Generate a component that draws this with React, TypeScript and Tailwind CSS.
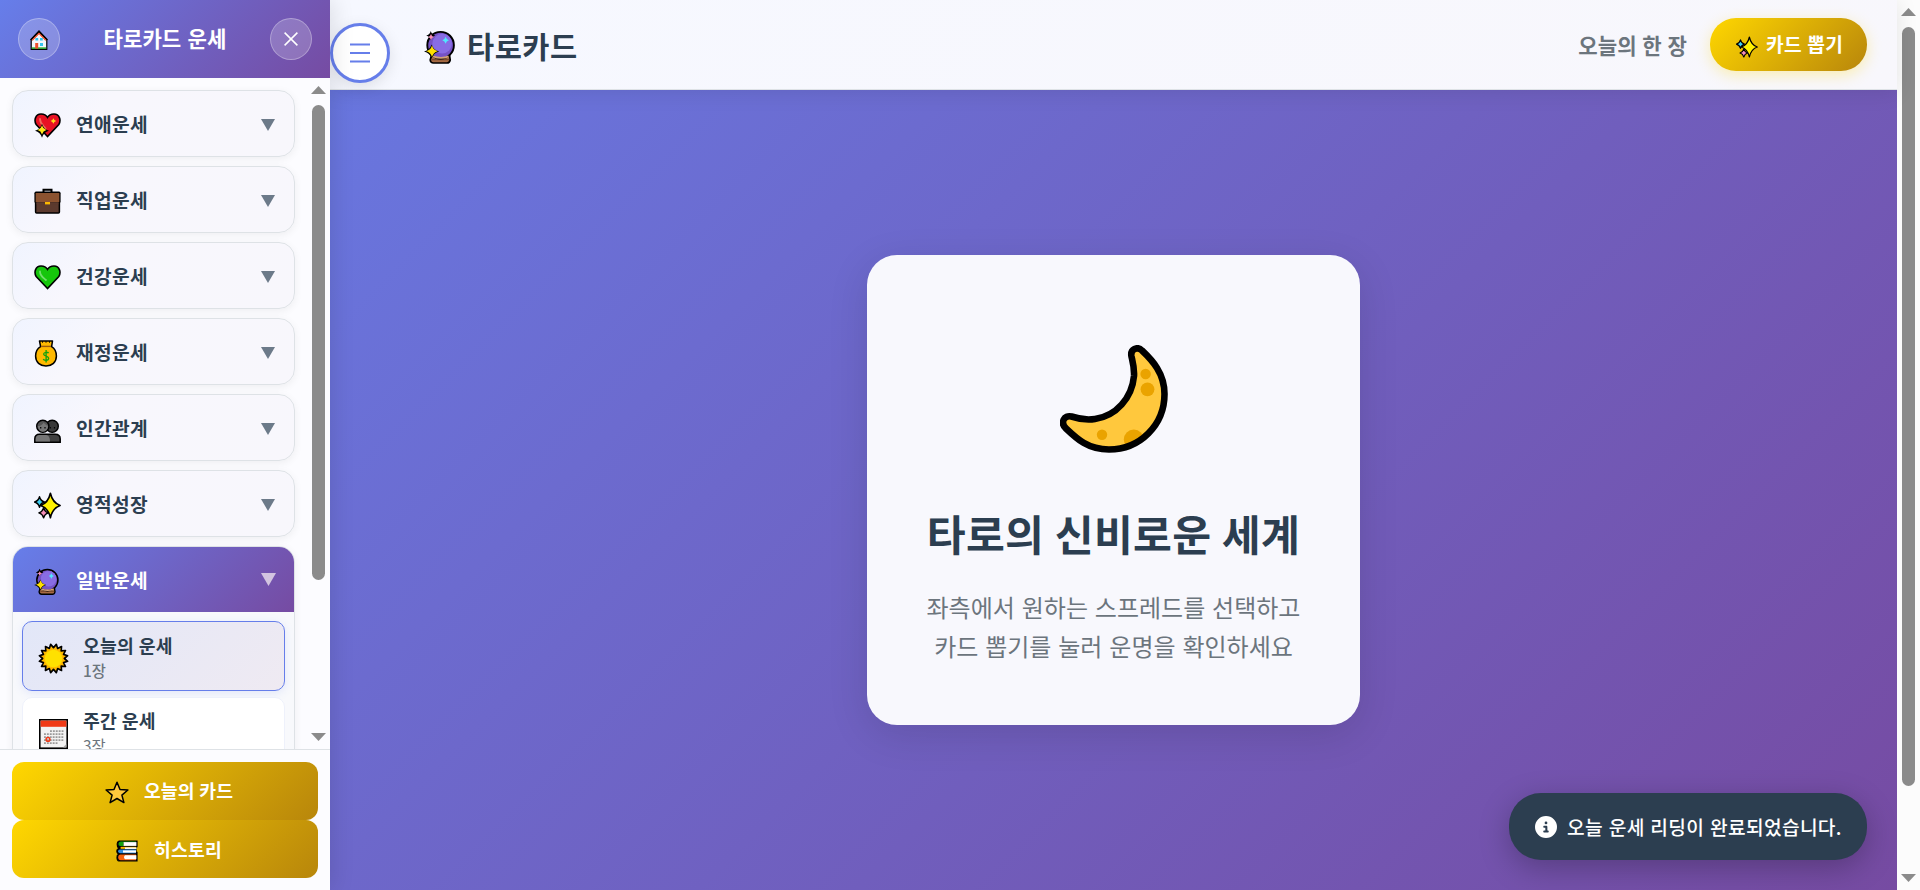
import React from "react";

type IconProps = { className?: string };

const sparkle = (x: number, y: number, rx: number, ry: number) =>
  `M${x} ${y - ry}Q${x + rx * 0.22} ${y - ry * 0.22} ${x + rx} ${y}Q${x + rx * 0.22} ${y + ry * 0.22} ${x} ${y + ry}Q${x - rx * 0.22} ${y + ry * 0.22} ${x - rx} ${y}Q${x - rx * 0.22} ${y - ry * 0.22} ${x} ${y - ry}Z`;

function HomeIcon({ className }: IconProps) {
  return (
    <svg viewBox="0 0 18 20" className={className}>
      <path d="M1.2 9.500V19.400H16.8V9.500L9 2Z" fill="#f4f7fb" stroke="#000" strokeWidth="1.2" />
      <path d="M1.800 17.400H16.200V18.800H1.800Z" fill="#16a018" />
      <path d="M2.200 10.400L9 3.400L15.800 10.400" fill="none" stroke="#f0401c" strokeWidth="1.300" />
      <path d="M.5 9.800L9 .9L17.500 9.800" fill="none" stroke="#000" strokeWidth="1.2" />
      <path d="M5.400 8H8.200V10.600H5.400ZM10 8H12.800V10.600H10ZM10 13H13V16H10Z" fill="#35c5f0" />
      <path d="M5.200 13H8.200V18.600H5.200Z" fill="#f0502c" />
    </svg>
  );
}

function HeartIcon({ className }: IconProps) {
  return (
    <svg viewBox="0 0 27 27" className={className}>
      <path d="M13.5 24.500L2.2 12.600C-.4 8 1.6 2 7 2C10 2 12.4 3.400 13.5 5.400C14.6 3.400 17 2 20 2C25.4 2 27.4 8 24.8 12.600Z" fill="#e81224" stroke="#000" strokeWidth="1.6" />
      <path d="M6 7C6 12 10 14 11.500 16.500" fill="none" stroke="#f26b5c" strokeWidth="1.8" strokeLinecap="round" />
      <path d={sparkle(19.4, 9, 2.8, 2.8)} fill="#ffd91a" />
      <path d={sparkle(8, 18.800, 7, 7)} fill="#000" />
      <path d={sparkle(8, 18, 4.400, 4.400)} fill="#ffe81a" />
    </svg>
  );
}

function BriefcaseIcon({ className }: IconProps) {
  return (
    <svg viewBox="0 0 27 27" className={className}>
      <path d="M9.5 5V1.8H17.5V5" fill="none" stroke="#000" strokeWidth="2" />
      <rect x="1.6" y="13" width="23.8" height="12" rx="1" fill="#5c3a2e" stroke="#000" strokeWidth="1.5" />
      <rect x=".4" y="3.600" width="26.200" height="11.600" rx="1.6" fill="#000" />
      <rect x="1.700" y="5" width="23.600" height="9.200" rx=".6" fill="#8c5330" />
      <rect x="2.4" y="14.2" width="22.2" height="2" fill="#5c3a2e" />
      <rect x="11" y="14" width="5" height="2.4" fill="#fcb900" />
    </svg>
  );
}

function GreenHeartIcon({ className }: IconProps) {
  return (
    <svg viewBox="0 0 27 27" className={className}>
      <path d="M13.5 24.500L2.2 12.600C-.4 8 1.6 2 7 2C10 2 12.4 3.400 13.5 5.400C14.6 3.400 17 2 20 2C25.4 2 27.4 8 24.8 12.600Z" fill="#16c60c" stroke="#000" strokeWidth="1.6" />
      <path d="M6 7.500C6 12 9 13.500 12 16" fill="none" stroke="#73de6c" strokeWidth="1.8" strokeLinecap="round" />
    </svg>
  );
}

function MoneyIcon({ className }: IconProps) {
  return (
    <svg viewBox="0 0 27 27" className={className}>
      <path d="M5.5 1H18.5L17.6 6.6C20.5 8.4 22.4 12 22.4 16C22.4 22.4 18 26 12 26C6 26 1.6 22.4 1.6 16C1.6 12 3.5 8.4 6.6 6.6Z" fill="#ffb900" stroke="#000" strokeWidth="1.5" strokeLinejoin="round" />
      <path d="M7.2 6.4H17" stroke="#9a5b10" strokeWidth="1.4" />
      <path d="M8.5 1.2V2.7M12 1.2V2.7M15.5 1.2V2.7" stroke="#000" strokeWidth="1" />
      <path d="M14.6 13.1C14 12 10 11.7 9.6 14C9.6 16.6 14.7 15.6 14.7 18.3C14.6 21 9.8 20.8 9.3 19M12.1 10V22.4" fill="none" stroke="#13a10e" strokeWidth="1.3" />
    </svg>
  );
}

function PeopleIcon({ className }: IconProps) {
  return (
    <svg viewBox="0 -1.5 27 27" className={className}>
      <circle cx="18.2" cy="8.8" r="6.1" fill="#383838" stroke="#000" strokeWidth="1.4" />
      <circle cx="8.8" cy="8.8" r="6.1" fill="#555" stroke="#000" strokeWidth="1.4" />
      <path d="M4 8.5C6 9 8.5 7.4 9.5 5C11 7 13 8 14 8.2C14 12 12 14 8.8 14.2C6 14 4 12 4 8.5Z" fill="#767676" />
      <path d="M6.7 9.5V10.9M11 9.5V10.9M16.3 9.5V10.9M20.5 9.5V10.9" stroke="#000" strokeWidth="1.2" />
      <path d="M.8 24.700V21.5Q.8 16.7 5.8 16.7H21.2Q26.2 16.7 26.2 21.5V24.700Z" fill="#404040" stroke="#000" strokeWidth="1.5" />
      <path d="M1.7 24V21.5Q1.7 17.6 5.8 17.6H12Q16 18 16 24Z" fill="#767676" />
    </svg>
  );
}

function SparklesIcon({ className }: IconProps) {
  return (
    <svg viewBox="0 0 27 27" className={className} strokeLinejoin="round">
      <path d={sparkle(5.5, 10, 4.9, 5.3)} fill="#3fd0f5" stroke="#000" strokeWidth="1.4" />
      <path d={sparkle(9.6, 20.8, 4.7, 5)} fill="#f78fb8" stroke="#000" strokeWidth="1.4" />
      <path d={sparkle(16.4, 13.5, 9.7, 12.2)} fill="#fff100" stroke="#000" strokeWidth="1.6" />
    </svg>
  );
}

function CrystalBallIcon({ className }: IconProps) {
  return (
    <svg viewBox="0 0 31 34" className={className}>
      <path d="M7.5 25H25.5L26.2 30Q25.6 33 23 33H9.4Q6.600 33 6.200 30Z" fill="#a56a43" stroke="#000" strokeWidth="1.7" />
      <path d="M7.800 29.6H25" stroke="#7a4a2c" strokeWidth="1.2" />
      <circle cx="16.6" cy="15.2" r="13.3" fill="#7552c5" stroke="#000" strokeWidth="1.9" />
      <circle cx="18.2" cy="13.6" r="9.8" fill="#886ce4" />
      <path d="M9 26.400Q17 29.500 24.6 26.400" stroke="#d2a078" strokeWidth="1.8" fill="none" />
      <path d={sparkle(6.800, 5.600, 4.600, 4.600)} fill="#000" />
      <path d={sparkle(7, 7, 2.900, 3)} fill="#f78fb8" />
      <path d={sparkle(21.600, 10.2, 3.3, 3.5)} fill="#50e6ff" />
      <path d={sparkle(7.6, 21.4, 7.6, 7)} fill="#000" />
      <path d={sparkle(8, 21.2, 5.7, 5.7)} fill="#ffe000" />
    </svg>
  );
}

function SunIcon({ className }: IconProps) {
  const points: string[] = [];
  for (let i = 0; i < 32; i++) {
    const r = i % 2 ? 11.2 : 14.9;
    const a = (i * Math.PI) / 16 + Math.PI / 16;
    points.push(`${(16 + r * Math.sin(a)).toFixed(2)},${(16 - r * Math.cos(a)).toFixed(2)}`);
  }
  return (
    <svg viewBox="0 0 32 32" className={className}>
      <polygon points={points.join(" ")} fill="#ffb900" stroke="#000" strokeWidth="1.7" strokeLinejoin="round" />
      <circle cx="16" cy="16" r="9" fill="#ffe100" />
    </svg>
  );
}

function CalendarIcon({ className }: IconProps) {
  return (
    <svg viewBox="0 0 29 30" className={className}>
      <rect x=".8" y=".8" width="27.4" height="28.4" fill="#f2f2f2" stroke="#000" strokeWidth="1.6" />
      <rect x="1.6" y="1.6" width="25.8" height="6.2" fill="#f03a17" />
      <path d="M11 12.2H25M5 15.2H25M5 18.2H25M5 21.2H25M5 24.2H19" stroke="#9a9a9a" strokeWidth="1.8" strokeDasharray="1.9 1" />
      <circle cx="9" cy="20.4" r="1.9" fill="none" stroke="#f03a17" strokeWidth="1.5" />
      <path d="M24 28.4L27.4 25V28.4Z" fill="#a8a8a8" />
    </svg>
  );
}

function StarIcon({ className }: IconProps) {
  return (
    <svg viewBox="0 0 24 23" className={className}>
      <path d="M12 1.2L15 8.5L22.9 9L16.9 14.1L18.9 21.6L12 17.5L5.1 21.6L7.1 14.1L1.1 9L9 8.5Z" fill="#ffc83d" stroke="#000" strokeWidth="1.5" strokeLinejoin="round" />
    </svg>
  );
}

function BooksIcon({ className }: IconProps) {
  return (
    <svg viewBox="0 0 22 22" className={className}>
      <path d="M3 1H21V6.6H20V12.4H21V21H3Q1 20.6 1 17.5Q1 15 2.4 14Q.8 13.2 .8 11Q.8 9 3 8.4Q1 7 1.2 4Q1.2 1.4 3 1Z" fill="#000" stroke="#000" strokeWidth="1.2" />
      <path d="M2.4 4Q2.4 1.6 4.6 1.4H20V2H8Q6.8 4 8 6H4.2Q2.4 5.8 2.4 4Z" fill="#13a10e" />
      <rect x="7.6" y="2.1" width="12.8" height="3.8" fill="#fff" />
      <path d="M4.6 6.8H20V8.8H4.6Z" fill="#ffb900" />
      <path d="M9 7.4H20.5V9.1H9Z" fill="#f5f5f5" />
      <path d="M2 11.6Q2 9.8 4 9.6H20V13.2H4Q2 13 2 11.6Z" fill="#2d8cdf" />
      <path d="M7 10.4H20V12.6H7Z" fill="#fff" />
      <path d="M2.2 17.2Q2.2 14.5 4.6 14.4H20V20.2H4.6Q2.2 20 2.2 17.2Z" fill="#f7630c" />
      <path d="M9 15.2H20.4V19.3H9Q7 17.2 9 15.2Z" fill="#fff" />
    </svg>
  );
}

const moonPath =
  "M71.5 11.5C70 4 77.5 1 82 5.5C92 15 104.5 28 104.5 49C104.5 80 80 104.5 49 104.5C28 104.5 17 94 6 83.5C0 78 4 69.5 11.5 71.5C19 74 26 75.5 35 74C56 71 72 53 74 31C74.5 23 73 18 71.5 11.5Z";

function MoonIcon({ className }: IconProps) {
  return (
    <svg viewBox="0 0 108 108" className={className}>
      <defs>
        <clipPath id="moon-shape">
          <path d={moonPath} />
        </clipPath>
      </defs>
      <g clipPath="url(#moon-shape)">
        <rect width="108" height="108" fill="#ffc83d" />
        <circle cx="85.6" cy="29" r="5.2" fill="#eaa300" />
        <circle cx="87.5" cy="44.3" r="6.9" fill="#eaa300" />
        <circle cx="42" cy="89.7" r="5.2" fill="#eaa300" />
        <circle cx="73.8" cy="94.6" r="10" fill="#eaa300" />
      </g>
      <path d={moonPath} fill="none" stroke="#000" strokeWidth="6.6" />
    </svg>
  );
}

function InfoIcon({ className }: IconProps) {
  return (
    <svg viewBox="0 0 512 512" className={className}>
      <path fill="#fff" d="M256 512A256 256 0 1 0 256 0a256 256 0 1 0 0 512zM216 336h24V272H216c-13.300 0-24-10.700-24-24s10.700-24 24-24h48c13.300 0 24 10.700 24 24v88h8c13.300 0 24 10.700 24 24s-10.700 24-24 24H216c-13.300 0-24-10.700-24-24s10.700-24 24-24zm40-208a32 32 0 1 1 0 64 32 32 0 1 1 0-64z" />
    </svg>
  );
}

function Triangle({ className, up }: IconProps & { up?: boolean }) {
  return (
    <svg viewBox="0 0 14 12" preserveAspectRatio="none" className={className}>
      <path d={up ? "M0 12H14L7 0Z" : "M0 0H14L7 12Z"} fill="currentColor" />
    </svg>
  );
}

const categories = [
  { label: "연애운세", Icon: HeartIcon },
  { label: "직업운세", Icon: BriefcaseIcon },
  { label: "건강운세", Icon: GreenHeartIcon },
  { label: "재정운세", Icon: MoneyIcon },
  { label: "인간관계", Icon: PeopleIcon },
  { label: "영적성장", Icon: SparklesIcon },
];

function Sidebar() {
  return (
    <aside className="relative z-10 flex h-full w-[330px] shrink-0 flex-col bg-[#fcfcff] shadow-[4px_0_20px_rgba(0,0,0,0.1)]">
      <div className="flex h-[78px] shrink-0 items-center justify-between bg-[linear-gradient(135deg,#667eea,#764ba2)] px-[18px]">
        <button className="flex size-[42px] items-center justify-center rounded-full border border-white/30 bg-white/20">
          <HomeIcon className="mt-0.5 h-5 w-[18px]" />
        </button>
        <h2 className="pb-[3px] text-[21.12px] font-bold leading-8 text-white [word-spacing:1.5px]">타로카드 운세</h2>
        <button className="flex size-[42px] items-center justify-center rounded-full border border-white/30 bg-white/20">
          <svg viewBox="0 0 14 14" className="size-3.5">
            <path d="M.6 .6L13.4 13.4M13.4 .6L.6 13.4" stroke="#fff" strokeWidth="1.5" />
          </svg>
        </button>
      </div>

      <div className="flex min-h-0 flex-1 justify-between overflow-hidden">
        <div className="flex w-[295px] flex-col gap-[9px] pl-3 pt-3">
          {categories.map(({ label, Icon }) => (
            <button
              key={label}
              className="flex h-[67px] shrink-0 items-center rounded-2xl border border-[#dee2e6] bg-[linear-gradient(135deg,#f0f4ff,#f8f7fd_30%,#f8f7fc)] pl-[21px] pr-[19px] shadow-[0_2px_8px_rgba(0,0,0,0.06)]"
            >
              <Icon className="mt-1 size-[27px]" />
              <span className="ml-[15px] text-[19.2px] font-semibold leading-8 tracking-[0.34px] text-[#2c3e50]">{label}</span>
              <Triangle className="ml-auto mt-0.5 h-3 w-3.5 text-[#6c7a89]" />
            </button>
          ))}

          <div className="flex h-[400px] shrink-0 flex-col overflow-hidden rounded-2xl border border-[#dee2e6] bg-[#f8f9fc] shadow-[0_2px_8px_rgba(0,0,0,0.06)]">
            <button className="flex h-[65px] shrink-0 items-center bg-[linear-gradient(135deg,#667eea,#764ba2)] pl-[21px] pr-[18px]">
              <CrystalBallIcon className="mt-1 h-[27px] w-[25px]" />
              <span className="ml-[17px] text-[19.2px] font-bold leading-8 tracking-[0.34px] text-white">일반운세</span>
              <Triangle className="ml-auto h-[13px] w-[15px] text-[#d3c4e0]" />
            </button>
            <div className="flex flex-col gap-1.5 px-[9px] pt-[9px]">
              <button className="flex h-[70px] items-center rounded-[10px] border border-[#667eea] bg-[linear-gradient(135deg,#e2e7f8,#efeaf2)] pl-[15px] text-left shadow-[0_2px_10px_rgba(102,126,234,0.15)]">
                <SunIcon className="mt-1 size-[31px]" />
                <span className="ml-[14px] flex flex-col pt-0.5">
                  <span className="text-[18.24px] font-semibold leading-[26px] tracking-[0.2px] text-[#2c3e50] [word-spacing:0.5px]">오늘의 운세</span>
                  <span className="text-[15.36px] font-medium leading-[25px] text-[#6c757d]">1장</span>
                </span>
              </button>
              <button className="flex h-[70px] items-center rounded-[10px] border border-[#eef1fb] bg-white pl-[15px] text-left">
                <CalendarIcon className="ml-px mt-1 h-[30px] w-[29px]" />
                <span className="ml-[15px] flex flex-col">
                  <span className="text-[18.24px] font-semibold leading-[26px] tracking-[0.2px] text-[#2c3e50] [word-spacing:0.5px]">주간 운세</span>
                  <span className="text-[15.36px] leading-[25px] text-[#6c757d]">3장</span>
                </span>
              </button>
            </div>
          </div>
        </div>

        <div className="mr-1 flex w-[15px] flex-col items-center pb-2 pt-2 text-[#8b8b8b]">
          <Triangle up className="h-2 w-[15px]" />
          <div className="mt-[11px] h-[475px] w-[13px] rounded-full bg-[#8b8b8b]" />
          <Triangle className="mt-auto h-2 w-[15px]" />
        </div>
      </div>

      <div className="h-[141px] shrink-0 border-t border-[#dee2e6] px-3 pt-3">
        <button className="flex h-[58px] w-full items-center justify-center gap-[15px] rounded-xl bg-[linear-gradient(135deg,#ffd700,#b8860b)] pl-2 text-[18.24px] font-bold tracking-[0.2px] text-white">
          <StarIcon className="mt-0.5 h-[23px] w-6" />
          <span>오늘의 카드</span>
        </button>
        <button className="flex h-[58px] w-full items-center justify-center gap-4 rounded-xl bg-[linear-gradient(135deg,#ffd700,#b8860b)] pl-2 text-[18.24px] font-bold tracking-[0.2px] text-white">
          <BooksIcon className="mt-1 size-[22px]" />
          <span className="pt-0.5">히스토리</span>
        </button>
      </div>
    </aside>
  );
}

export default function App() {
  return (
    <div className="flex h-[890px] w-[1920px] overflow-hidden bg-[#fcfcfc] font-['Noto_Sans_CJK_KR',sans-serif]">
      <div className="relative flex h-full w-[1897px] shrink-0 bg-[linear-gradient(135deg,#667eea,#764ba2)]">
        <Sidebar />
        <div className="flex min-w-0 flex-1 flex-col">
          <header className="flex h-[90px] shrink-0 items-center border-b border-[#dee2e6] bg-[linear-gradient(135deg,#f6f8ff,#f8f7fc)] pr-[30px] shadow-[0_2px_20px_rgba(0,0,0,0.1)]">
            <button className="mt-4 flex size-[60px] items-center justify-center rounded-full border-[3px] border-[#667eea] bg-white shadow-[0_4px_15px_rgba(0,0,0,0.1)]">
              <svg viewBox="0 0 20 20" className="h-5 w-5">
                <path d="M0 1.5H20M0 10H20M0 18.5H20" stroke="#667eea" strokeWidth="2" />
              </svg>
            </button>
            <CrystalBallIcon className="ml-[34px] mt-1 h-[34px] w-[31px]" />
            <h1 className="ml-3 text-[29.5px] font-bold leading-10 tracking-[0.5px] text-[#2c3e50]">타로카드</h1>
            <span className="ml-auto text-[21.12px] font-semibold leading-8 text-[#6c757d] [word-spacing:1px]">오늘의 한 장</span>
            <button className="ml-[23px] flex h-[53px] w-[157px] items-center rounded-[26px] bg-[linear-gradient(135deg,#ffd700,#b8860b)] pl-[26px] text-[19.2px] font-bold tracking-[0.3px] text-white shadow-[0_4px_15px_rgba(255,215,0,0.3)] [word-spacing:0.8px]">
              <SparklesIcon className="mt-1 size-[22px]" />
              <span className="ml-2">카드 뽑기</span>
            </button>
          </header>

          <main className="flex flex-1 items-center justify-center">
            <section className="flex h-[470px] w-[493px] flex-col items-center rounded-[30px] bg-[#f8f8fd] pt-[90px] shadow-[0_10px_40px_rgba(0,0,0,0.12)]">
              <MoonIcon className="size-[108px]" />
              <h2 className="mt-[47px] whitespace-nowrap text-[42.24px] font-bold leading-[66px] tracking-[0.3px] text-[#2c3e50] [word-spacing:0.6px]">타로의 신비로운 세계</h2>
              <p className="mt-[21px] whitespace-nowrap text-center text-[24px] leading-[39px] text-[#6c757d] [word-spacing:1.5px]">
                좌측에서 원하는 스프레드를 선택하고
                <br />
                카드 뽑기를 눌러 운명을 확인하세요
              </p>
            </section>
          </main>
        </div>

        <div className="absolute bottom-[30px] right-[30px] flex h-[67px] w-[358px] items-center rounded-[32px] bg-[#2c3e50] pl-[26px] shadow-[0_8px_30px_rgba(0,0,0,0.25)]">
          <InfoIcon className="size-[22px]" />
          <span className="ml-[10px] whitespace-nowrap text-[19.2px] font-medium leading-8 tracking-[0.34px] text-white [word-spacing:1px]">오늘 운세 리딩이 완료되었습니다.</span>
        </div>
      </div>

      <div className="flex w-[23px] flex-col items-center pb-2 pt-2 text-[#8b8b8b]">
        <Triangle up className="h-2 w-[15px]" />
        <div className="mt-[11px] h-[759px] w-[13px] rounded-full bg-[#8b8b8b]" />
        <Triangle className="mt-auto h-2 w-[15px]" />
      </div>
    </div>
  );
}
